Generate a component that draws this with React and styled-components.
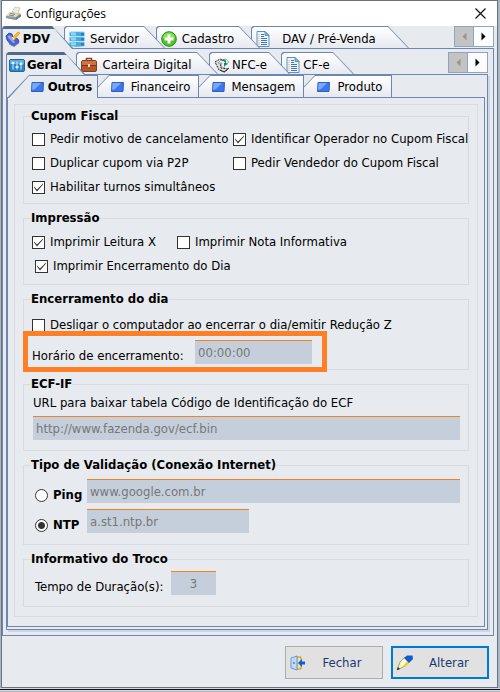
import React, { useState } from 'react'
import styled, { createGlobalStyle, css } from 'styled-components'

const line = '#6f86b0'
const face = '#e7eaee'
const font = '"DejaVu Sans Condensed", "DejaVu Sans", sans-serif'

const GlobalStyle = createGlobalStyle`
    * {
        box-sizing: border-box;
    }
    body {
        margin: 0;
        background-color: #a9b6c6;
        font-family: ${font};
        font-size: 13px;
        line-height: 16px;
        color: #000;
    }
    button, input {
        font: inherit;
        color: inherit;
    }
`

const Window = styled.main`
    margin: 0 2px 0 1px;
    border: 1px solid #6b727c;
    background-color: ${face};
`
const Desktop = styled.div`
    height: 3px;
    border-top: 1px solid #d5d7da;
    border-bottom: 1px solid #d5d7da;
    background-color: #111;
`
const TitleBar = styled.header`
    display: flex;
    align-items: center;
    height: 25px;
    padding: 0 11px 0 3px;
    gap: 4px;
    background-color: #fff;
`
const Title = styled.h1`
    flex: 1;
    margin: 0;
    font: 400 12px/16px "Open Sans", sans-serif;
`
const CloseButton = styled.button`
    display: flex;
    padding: 0;
    border: 0;
    background: none;
`
const TabRow = styled.div`
    position: relative;
    z-index: 1;
    display: flex;
    margin-bottom: -1px;
`
const rightSlope = css`
    margin-left: -10px;
    padding: 2px 22px 0 5px;
    clip-path: polygon(0 2px, 2px 0, calc(100% - 22px) 0, 100% 100%, 0 100%);

    &:first-child {
        margin-left: 0;
        padding-left: 3px;
    }
    &::before {
        clip-path: polygon(0 2px, 2px 0, calc(100% - 21px) 0, calc(100% - 1px) 100%, 0 100%);
    }
`
const leftSlope = css`
    margin-left: -11px;
    padding: 1px 2px 0 24px;
    clip-path: polygon(0 100%, 22px 0, 100% 0, 100% 100%);

    &:first-child {
        margin-left: 0;
    }
    &::before {
        clip-path: polygon(1px 100%, 21px 0, 100% 0, 100% 100%);
    }
`
const Tab = styled.button`
    position: relative;
    display: flex;
    align-items: center;
    width: ${({ $width }) => $width}px;
    height: 23px;
    border: 0;
    background-color: ${line};
    white-space: nowrap;
    font-weight: ${({ $active }) => ($active ? 700 : 400)};
    z-index: ${({ $order }) => 10 - $order};
    ${({ $left }) => ($left ? leftSlope : rightSlope)}

    &::before {
        content: "";
        position: absolute;
        inset: 1px;
        z-index: -1;
        background: linear-gradient(#fff, #e6e9f0);
        ${({ $active }) => $active && css`
            bottom: 0;
            background: ${face};
        `}
        ${({ $active, $left }) => $active && !$left && css`
            top: 0;
            background: linear-gradient(#54688a 3px, ${face} 3px);
        `}
    }
`
const TabText = styled.span`
    flex: 1;
    text-align: center;
`
const Scroller = styled.div`
    display: flex;
    margin-left: auto;
    height: 21px;
    border: 1px solid #93a3be;
`
const ScrollButton = styled.button`
    display: flex;
    align-items: center;
    justify-content: center;
    width: 19px;
    padding: 0;
    border: 0;
    background-color: #fbfcfd;

    &:disabled {
        background-color: #c3c3c3;
        border-right: 1px solid #93a3be;
    }
`
const OuterTabs = styled.section`
    padding: 0 3px 0 0;
`
const OuterPage = styled.div`
    border: 1px solid ${line};
    padding: 3px 5px 5px 3px;
`
const MiddlePage = styled.div`
    border: 1px solid ${line};
    padding: 0 2px 2px 0;
    box-shadow: 2px 2px 0 #d0d5de;
`
const InnerPage = styled.div`
    border: 1px solid ${line};
    padding: 6px 6px 9px;
`
const Options = styled.form`
    display: flex;
    flex-direction: column;
    gap: 6px;
    padding: 3px 8px 9px;
    border: 1px solid #d9dbde;
`
const Group = styled.fieldset`
    position: relative;
    min-width: 0;
    margin: 0;
    padding: ${({ $pad }) => $pad};
    border: 1px solid #d9dbde;
`
const Legend = styled.legend`
    margin-left: -1px;
    padding: 0;
    font-weight: 700;
`
const CheckGrid = styled.div`
    display: grid;
    grid-template-columns: ${({ $first }) => $first}px auto;
    grid-auto-rows: 24px;
    align-items: center;
    white-space: nowrap;
`
const CheckLabel = styled.label`
    display: flex;
    align-items: center;
    gap: 5px;
    padding-left: ${({ $indent }) => ($indent ? 3 : 0)}px;
`
const CheckInput = styled.input.attrs({ type: 'checkbox' })`
    appearance: none;
    flex: none;
    width: 13px;
    height: 13px;
    margin: 0;
    border: 1px solid #333;
    background-color: #fff;

    &:checked::after {
        content: "";
        display: block;
        height: 11px;
        background-color: #333;
        clip-path: polygon(1px 5px, 4px 8px, 10px 2px, 10px 3px, 4px 10px, 1px 6px);
    }
`
const RadioLabel = styled.label`
    display: flex;
    flex: none;
    align-items: center;
    gap: 5px;
    width: 52px;
    font-weight: 700;
`
const RadioInput = styled.input.attrs({ type: 'radio' })`
    appearance: none;
    flex: none;
    width: 13px;
    height: 13px;
    margin: 0;
    border: 1px solid #333;
    border-radius: 50%;
    background-color: #fff;

    &:checked {
        background: radial-gradient(circle, #333 3px, #fff 4px);
    }
`
const FieldRow = styled.div`
    display: flex;
    align-items: flex-end;
    padding-left: ${({ $indent }) => ($indent ? 3 : 0)}px;
`
const ClosingRow = styled(FieldRow)`
    padding-top: 3px;
`
const ServerList = styled.div`
    display: flex;
    flex-direction: column;
    gap: 6px;
    padding-left: 3px;
`
const Field = styled.input`
    width: ${({ $width }) => ($width ? `${$width}px` : '100%')};
    min-width: 0;
    height: 24px;
    padding: 0 3px 1px;
    border: 0;
    border-top: 1px solid #f58220;
    border-radius: 0;
    background-color: #c4cfdb;
    color: #777;
    text-align: ${({ $center }) => ($center ? 'center' : 'left')};
`
const FieldLabel = styled.label`
    display: block;
    width: ${({ $width }) => ($width ? `${$width}px` : 'auto')};
    white-space: nowrap;
`
const UrlField = styled.div`
    display: flex;
    flex-direction: column;
    gap: 5px;
    padding-left: 1px;
`
const Highlight = styled.div`
    position: absolute;
    top: 24px;
    left: -1px;
    width: 304px;
    height: 41px;
    border: 5px solid #ff7f27;
    pointer-events: none;
`
const Footer = styled.footer`
    display: flex;
    justify-content: flex-end;
    gap: 8px;
    padding: 10px 8px 8px;
`
const ActionButton = styled.button`
    display: flex;
    align-items: center;
    width: 98px;
    height: 33px;
    padding: 0 ${({ $primary }) => ($primary ? 3 : 4)}px;
    border: ${({ $primary }) => ($primary ? '2px solid #0078d7' : '1px solid #adadad')};
    background-color: #e1e1e1;
    color: #1a3a72;
`
const Svg = styled.svg`
    display: block;
    flex: none;
`

const Icon = ({ w = 16, h = 16, children }) => (
    <Svg width={w} height={h} viewBox={`0 0 ${w} ${h}`} aria-hidden="true">{children}</Svg>
)

const RegisterIcon = () => (
    <Icon w={17}>
        <path d="M1 10 5 6l10 1 1 3-5 4-10-2z" fill="#a8a79a" />
        <path d="m1 10 4-4 10 1-4 4z" fill="#e0dcc0" />
        <path d="m7 6 3-5 5 1-2 6z" fill="#f3ecd0" stroke="#b9b9a8" strokeWidth=".6" />
        <path d="m4 9 5 .8M5 7.5l5 .8" stroke="#80889a" />
        <path d="m1 10 10 1.5v2.5L1 12z" fill="#8e97a6" />
        <path d="m11 11.5 5-3.500v2.500L11 14z" fill="#6f7d94" />
    </Icon>
)
const ScannerIcon = () => (
    <Icon>
        <path d="M1 5 4 2l3 1 1 3 5 2 1 3-4 4-4-1-4-5z" fill="#4763d8" stroke="#2a3a9c" strokeWidth=".8" />
        <path d="m2.500 6 2-2 5.500 7-1.500 1.500z" fill="#8ba6f2" />
        <path d="m4 13 5 2.500 5-3.500" stroke="#8b93b0" fill="none" />
        <path d="m7 7 2 2 6-7-2-1z" fill="#ffb916" stroke="#e58a00" strokeWidth=".6" />
        <path d="m6 5 2 4 2-1z" fill="#ffe884" />
    </Icon>
)
const ServerIcon = () => (
    <Icon>
        {[0, 5, 10].map(y => (
            <g key={y}>
                <path d={`M.5 ${y + 1}q7.500-1.500 15 0v4q-7.500 1.500-15 0z`} fill="#45a9e2" />
                <path d={`M2 ${y + 1.5}h5v3H2z`} fill="#8bd4f7" />
                <path d={`M12 ${y + 1.5}h3v3h-3z`} fill="#2585c0" />
                <path d={`M.5 ${y + 1}q7.500-1 15 0`} stroke="#c4ecff" fill="none" />
            </g>
        ))}
    </Icon>
)
const AddIcon = () => (
    <Icon>
        <circle cx="8" cy="8" r="7.300" fill="#53c22b" stroke="#279016" />
        <path d="M2 7a6 5.500 0 0 1 12 0q-6 2-12 0z" fill="#86df57" />
        <path d="M8 3.500v9M3.500 8h9" stroke="#fff" strokeWidth="3" />
    </Icon>
)
const DocIcon = () => (
    <Icon w={14}>
        <path d="M1 .5h8l4 4v11H1z" fill="#eaf5fd" stroke="#5c93b8" />
        <path d="M9 .5v4h4z" fill="#8cc0de" stroke="#3f7da6" strokeWidth=".7" />
        <path d="M5 3.500h3M5 5.500h3M5 7.500h6M5 9.500h6M5 11.500h6M5 13.500h6" stroke="#4a72b8" />
        <path d="M3 3v11" stroke="#f2a040" strokeDasharray="1 1" />
    </Icon>
)
const SlidersIcon = () => (
    <Icon>
        <rect x=".5" y="2.500" width="15" height="12" rx="1.500" fill="#2f86c3" stroke="#1b6aa6" />
        <path d="M1 3h14v4H1z" fill="#5aabdd" />
        <path d="M4 4.500v8M8 4.500v8M12 4.500v8" stroke="#d9efff" />
        <path d="M2.500 6h3M6.500 10h3M10.500 7h3" stroke="#fff" strokeWidth="1.500" />
    </Icon>
)
const BriefcaseIcon = () => (
    <Icon>
        <path d="M5.500 4V1.500h5V4" stroke="#8a4a2b" strokeWidth="1.500" fill="none" />
        <rect x=".5" y="3.500" width="15" height="11" rx="1.500" fill="#b5562c" stroke="#8a3c1c" />
        <path d="M1 4h14v4H1z" fill="#cf7445" />
        <path d="M1 8.500h14" stroke="#7c3418" />
        <path d="M7 7h2v3H7z" fill="#f5dcae" />
    </Icon>
)
const NfceIcon = () => (
    <Icon>
        <path d="m1 5 5-3 3 1-3 2 1 6 7 1-3 3-6-2z" fill="#d8d8d8" stroke="#222" strokeDasharray="2 1" />
        <path d="m4 6 3-3 5-1 3 3-4 3-1 3-3-2 1-3z" fill="#f1f1f1" stroke="#888" strokeWidth=".7" />
        <path d="M7 4c3-3 6-1 5 2l2 1-4 2V6l1 0c0-2-2-2-4-2z" fill="#13836f" />
        <path d="m6 13 4 2 5-4" stroke="#333" fill="none" />
    </Icon>
)
const BlueIcon = () => (
    <Icon w={13} h={10}>
        <path d="M1 .5h11.500l-.5 9H.5z" fill="#3c78ea" stroke="#2f5fc0" strokeLinejoin="round" />
        <path d="M1.500 1H10L4 7l-3 1z" fill="#7aa8f6" />
    </Icon>
)
const DoorIcon = () => (
    <Icon>
        <path d="M7 2h4v12H7z" fill="#f8e2a0" stroke="#c58c1a" />
        <path d="m1 3 6-2v14l-6-2z" fill="#b9dcfb" stroke="#6d9bd0" />
        <path d="M4 7v2" stroke="#245a9c" />
        <path d="m8 8 4-4v2.500h3v3h-3V12z" fill="#0b5fd8" />
    </Icon>
)
const PencilIcon = () => (
    <Icon w={18}>
        <path d="m1 15 3-8 5-5 4 5-6 5z" fill="#fff3a0" stroke="#6c6a4a" strokeWidth=".6" />
        <path d="m5 9 5-7 2 2-5 7z" fill="#fff" />
        <path d="m7 11 5-5 2 1-5 5z" fill="#f2c61e" />
        <path d="m8 3 3-2.500h5.500L17 4l-4 4z" fill="#0c5ed0" />
        <path d="m1 15 1-3 2 2z" fill="#222" />
    </Icon>
)
const CloseIcon = () => (
    <Icon w={11} h={11}>
        <path d="m.5.5 10 10m0-10-10 10" stroke="#111" strokeWidth="1.200" />
    </Icon>
)
const Arrow = ({ left }) => (
    <Icon w={5} h={9}>
        <path d={left ? 'M4.500.5v8l-4-4z' : 'M.5.5v8l4-4z'} fill={left ? '#969696' : '#000'} />
    </Icon>
)

const mainTabs = [
    { text: 'PDV', icon: <ScannerIcon />, width: 72 },
    { text: 'Servidor', icon: <ServerIcon />, width: 102 },
    { text: 'Cadastro', icon: <AddIcon />, width: 105 },
    { text: 'DAV / Pré-Venda', icon: <DocIcon />, width: 159 },
]
const generalTabs = [
    { text: 'Geral', icon: <SlidersIcon />, width: 80 },
    { text: 'Carteira Digital', icon: <BriefcaseIcon />, width: 143 },
    { text: 'NFC-e', icon: <NfceIcon />, width: 82 },
    { text: 'CF-e', icon: <DocIcon />, width: 74 },
]
const pageTabs = [
    { text: 'Outros', icon: <BlueIcon />, width: 91 },
    { text: 'Financeiro', icon: <BlueIcon />, width: 112 },
    { text: 'Mensagem', icon: <BlueIcon />, width: 116 },
    { text: 'Produto', icon: <BlueIcon />, width: 99 },
]

function Tabs({ tabs, left, scroll }) {
    return (
        <TabRow role="tablist">
            {tabs.map((tab, i) => (
                <Tab key={tab.text} type="button" role="tab" aria-selected={i === 0}
                    $active={i === 0} $order={i} $width={tab.width} $left={left}>
                    {tab.icon}
                    <TabText>{tab.text}</TabText>
                </Tab>
            ))}
            {scroll && (
                <Scroller>
                    <ScrollButton type="button" disabled aria-label="Anterior"><Arrow left /></ScrollButton>
                    <ScrollButton type="button" aria-label="Próximo"><Arrow /></ScrollButton>
                </Scroller>
            )}
        </TabRow>
    )
}

function Check({ children, checked, indent }) {
    return (
        <CheckLabel $indent={indent}>
            <CheckInput defaultChecked={checked} />
            {children}
        </CheckLabel>
    )
}

export default function App() {
    const [server, setServer] = useState('ntp')

    return (
        <>
            <GlobalStyle />
            <Window>
                <TitleBar>
                    <RegisterIcon />
                    <Title>Configurações</Title>
                    <CloseButton type="button" aria-label="Fechar janela"><CloseIcon /></CloseButton>
                </TitleBar>

                <OuterTabs>
                    <Tabs tabs={mainTabs} scroll />
                    <OuterPage>
                        <Tabs tabs={generalTabs} scroll />
                        <MiddlePage>
                            <Tabs tabs={pageTabs} left />
                            <InnerPage>
                                <Options>
                                    <Group $pad="3px 8px 4px">
                                        <Legend>Cupom Fiscal</Legend>
                                        <CheckGrid $first={201}>
                                            <Check>Pedir motivo de cancelamento</Check>
                                            <Check checked>Identificar Operador no Cupom Fiscal</Check>
                                            <Check>Duplicar cupom via P2P</Check>
                                            <Check>Pedir Vendedor do Cupom Fiscal</Check>
                                            <Check checked>Habilitar turnos simultâneos</Check>
                                        </CheckGrid>
                                    </Group>

                                    <Group $pad="4px 8px 6px">
                                        <Legend>Impressão</Legend>
                                        <CheckGrid $first={145}>
                                            <Check checked>Imprimir Leitura X</Check>
                                            <Check>Imprimir Nota Informativa</Check>
                                            <Check checked indent>Imprimir Encerramento do Dia</Check>
                                        </CheckGrid>
                                    </Group>

                                    <Group $pad="6px 8px 5px">
                                        <Legend>Encerramento do dia</Legend>
                                        <CheckGrid $first={360}>
                                            <Check>Desligar o computador ao encerrar o dia/emitir Redução Z</Check>
                                        </CheckGrid>
                                        <ClosingRow>
                                            <FieldLabel htmlFor="closing" $width={163}>Horário de encerramento:</FieldLabel>
                                            <Field id="closing" defaultValue="00:00:00" readOnly $width={117} />
                                        </ClosingRow>
                                        <Highlight />
                                    </Group>

                                    <Group $pad="3px 8px 10px">
                                        <Legend>ECF-IF</Legend>
                                        <UrlField>
                                            <FieldLabel htmlFor="url">URL para baixar tabela Código de Identificação do ECF</FieldLabel>
                                            <Field id="url" defaultValue="http://www.fazenda.gov/ecf.bin" readOnly />
                                        </UrlField>
                                    </Group>

                                    <Group $pad="6px 8px 11px">
                                        <Legend>Tipo de Validação (Conexão Internet)</Legend>
                                        <ServerList>
                                            <FieldRow>
                                                <RadioLabel>
                                                    <RadioInput name="server" checked={server === 'ping'} onChange={() => setServer('ping')} />
                                                    Ping
                                                </RadioLabel>
                                                <Field aria-label="Servidor Ping" defaultValue="www.google.com.br" readOnly />
                                            </FieldRow>
                                            <FieldRow>
                                                <RadioLabel>
                                                    <RadioInput name="server" checked={server === 'ntp'} onChange={() => setServer('ntp')} />
                                                    NTP
                                                </RadioLabel>
                                                <Field aria-label="Servidor NTP" defaultValue="a.st1.ntp.br" readOnly $width={162} />
                                            </FieldRow>
                                        </ServerList>
                                    </Group>

                                    <Group $pad="4px 8px 11px">
                                        <Legend>Informativo do Troco</Legend>
                                        <FieldRow $indent>
                                            <FieldLabel htmlFor="duration" $width={136}>Tempo de Duração(s):</FieldLabel>
                                            <Field id="duration" defaultValue="3" readOnly $width={45} $center />
                                        </FieldRow>
                                    </Group>
                                </Options>
                            </InnerPage>
                        </MiddlePage>
                    </OuterPage>
                </OuterTabs>

                <Footer>
                    <ActionButton type="button"><DoorIcon /><TabText>Fechar</TabText></ActionButton>
                    <ActionButton type="button" $primary><PencilIcon /><TabText>Alterar</TabText></ActionButton>
                </Footer>
            </Window>
            <Desktop />
        </>
    )
}
